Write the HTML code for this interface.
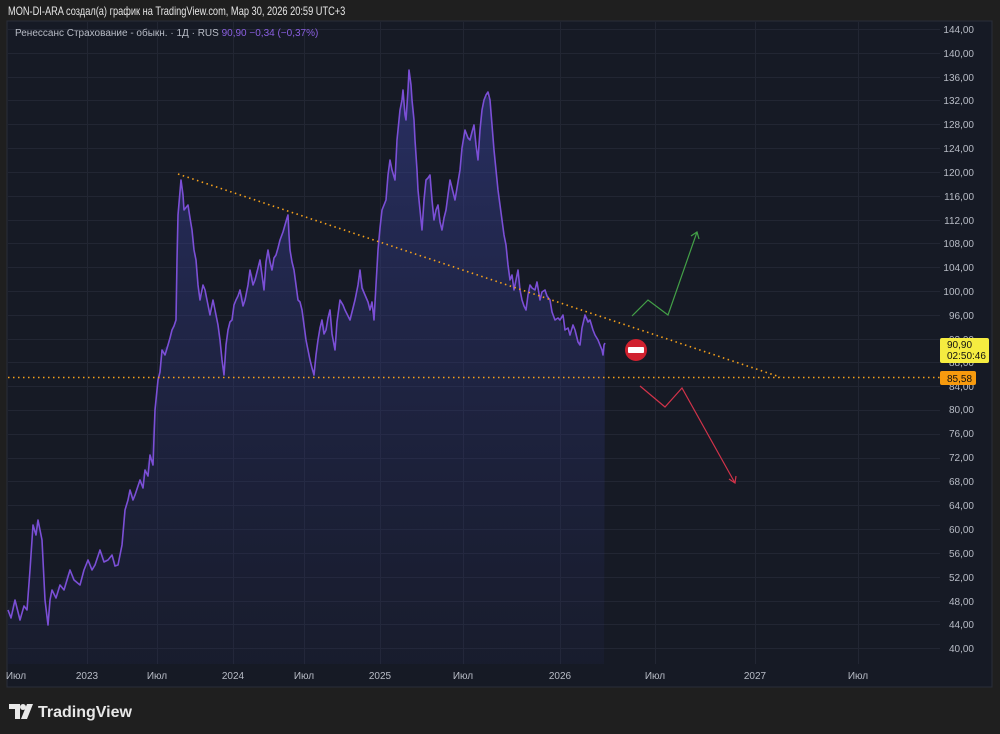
<!DOCTYPE html>
<html><head><meta charset="utf-8"><style>
body{margin:0;width:1000px;height:734px;background:#1f1f1f;font-family:"Liberation Sans","Noto Sans CJK SC",sans-serif;overflow:hidden;position:relative}
.t{position:absolute;color:#d9d9d9;white-space:nowrap}
</style></head><body>
<div class="t" style="left:8px;top:4px;font-size:12px;transform:scaleX(0.77);transform-origin:left top;color:#e6e6e6">MON-DI-ARA создал(а) график на TradingView.com, Мар 30, 2026 20:59 UTC+3</div>
<svg style="position:absolute;left:0;top:0" width="1000" height="734" font-family="Liberation Sans, sans-serif">
<defs><linearGradient id="g" x1="0" y1="0" x2="0" y2="1"><stop offset="0" stop-color="#3a44a0" stop-opacity="0.5"/><stop offset="1" stop-color="#2a2f6a" stop-opacity="0.12"/></linearGradient></defs>
<rect x="7" y="21" width="985" height="666" fill="#161a25" stroke="#2a2e39"/>
<g stroke="#222633" stroke-width="1">
<path d="M8 29.5H940M8 53.5H940M8 77.5H940M8 100.5H940M8 124.5H940M8 148.5H940M8 172.5H940M8 196.5H940M8 220.5H940M8 243.5H940M8 267.5H940M8 291.5H940M8 315.5H940M8 339.5H940M8 362.5H940M8 386.5H940M8 410.5H940M8 434.5H940M8 458.5H940M8 481.5H940M8 505.5H940M8 529.5H940M8 553.5H940M8 577.5H940M8 601.5H940M8 624.5H940M8 648.5H940"/>
<path d="M87.5 22V664M157.5 22V664M233.5 22V664M304.5 22V664M380.5 22V664M463.5 22V664M560.5 22V664M655.5 22V664M755.5 22V664M858.5 22V664"/>
</g>
<g fill="#b8bcc6" font-size="10" text-anchor="end">
<text x="974" y="33">144,00</text><text x="974" y="57">140,00</text><text x="974" y="81">136,00</text><text x="974" y="104">132,00</text><text x="974" y="128">128,00</text><text x="974" y="152">124,00</text><text x="974" y="176">120,00</text><text x="974" y="200">116,00</text><text x="974" y="224">112,00</text><text x="974" y="247">108,00</text><text x="974" y="271">104,00</text><text x="974" y="295">100,00</text><text x="974" y="319">96,00</text><text x="974" y="343">92,00</text><text x="974" y="366">88,00</text><text x="974" y="390">84,00</text><text x="974" y="413">80,00</text><text x="974" y="437">76,00</text><text x="974" y="461">72,00</text><text x="974" y="485">68,00</text><text x="974" y="509">64,00</text><text x="974" y="533">60,00</text><text x="974" y="557">56,00</text><text x="974" y="581">52,00</text><text x="974" y="605">48,00</text><text x="974" y="628">44,00</text><text x="974" y="652">40,00</text>
</g>
<g fill="#b8bcc6" font-size="10" text-anchor="middle">
<text x="16" y="679">Июл</text><text x="87" y="679">2023</text><text x="157" y="679">Июл</text><text x="233" y="679">2024</text><text x="304" y="679">Июл</text><text x="380" y="679">2025</text><text x="463" y="679">Июл</text><text x="560" y="679">2026</text><text x="655" y="679">Июл</text><text x="755" y="679">2027</text><text x="858" y="679">Июл</text>
</g>
<path fill="url(#g)" d="M8 610L15 600L20 620L27 610L33 525L38 520L42 540L45 600L48 625L52 590L60 585L70 570L80 585L88 560L95 565L100 550L108 560L112 555L118 565L122 545L125 510L130 490L135 495L140 480L145 470L150 455L155 410L158 380L162 350L168 345L172 330L176 320L178 215L181 180L184 210L188 205L192 230L196 260L200 300L205 290L210 315L215 310L220 340L224 375L228 330L232 320L236 300L240 290L245 300L250 270L255 280L260 260L264 290L268 250L272 270L276 255L280 240L285 225L288 215L290 250L294 270L298 300L302 310L306 340L310 360L314 375L318 340L322 320L326 330L330 310L335 350L340 300L345 310L350 320L355 300L360 270L365 295L370 310L374 320L378 250L382 210L386 200L390 160L395 180L400 110L403 90L406 120L409 70L412 100L415 140L418 190L422 230L426 180L430 175L434 220L438 205L442 230L446 210L450 180L455 200L460 170L465 130L470 140L474 125L478 160L482 110L486 95L490 100L494 150L498 190L502 220L506 245L510 280L514 290L518 270L522 300L526 310L530 285L535 290L540 300L545 290L550 300L555 320L560 320L565 330L570 335L575 330L580 345L585 315L590 320L595 335L600 345L603 355L605 343L604 664L8 664Z"/>
<polyline fill="none" stroke="#7b4fd6" stroke-width="1.6" stroke-linejoin="round" points="8,610 11,618 15,600 18,612 20,620 24,606 27,610 30,570 33,525 36,535 38,520 42,540 45,600 48,625 50,600 52,590 56,598 60,585 64,590 70,570 74,580 80,585 84,570 88,560 92,570 95,565 100,550 104,562 108,560 112,555 115,566 118,565 122,545 125,510 128,500 130,490 133,500 135,495 140,480 143,488 145,470 148,476 150,455 153,465 155,410 158,380 160,372 162,350 165,355 168,345 170,338 172,330 174,326 176,320 177,260 178,215 181,180 183,195 184,210 188,205 190,218 192,230 194,250 196,260 198,285 200,300 203,285 205,290 208,305 210,315 213,300 215,310 218,325 220,340 222,360 224,375 226,345 228,330 230,322 232,320 234,305 236,300 238,296 240,290 243,306 245,300 248,285 250,270 253,285 255,280 258,268 260,260 262,275 264,290 266,262 268,250 270,262 272,270 274,258 276,255 278,248 280,240 283,232 285,225 287,218 288,215 289,235 290,250 292,262 294,270 296,285 298,300 300,302 302,310 304,325 306,340 308,350 310,360 312,368 314,375 316,355 318,340 320,328 322,320 324,334 326,330 328,318 330,310 332,334 335,350 337,322 340,300 343,305 345,310 348,316 350,320 353,308 355,300 358,285 360,270 362,288 365,295 368,302 370,310 372,302 374,320 376,285 378,250 380,228 382,210 384,205 386,200 388,175 390,160 392,170 395,180 397,140 400,110 402,100 403,90 405,115 406,120 408,90 409,70 411,85 412,100 414,120 415,140 417,170 418,190 420,210 422,230 424,200 426,180 428,178 430,175 432,200 434,220 436,210 438,205 440,222 442,230 444,218 446,210 448,195 450,180 452,188 455,200 457,188 460,170 462,148 465,130 468,138 470,140 472,132 474,125 476,145 478,160 480,130 482,110 484,100 486,95 488,92 490,100 492,125 494,150 496,170 498,190 500,205 502,220 504,235 506,245 508,265 510,280 512,275 514,290 516,280 518,270 520,290 522,300 524,306 526,310 528,295 530,285 532,288 535,290 537,282 540,300 542,292 545,290 547,296 550,300 552,312 555,320 558,318 560,320 563,315 565,330 568,328 570,335 573,325 575,330 578,342 580,345 582,328 585,315 588,322 590,320 593,330 595,335 598,340 600,345 602,350 603,355 604,345 605,343"/>
<g stroke="#f7a21b" stroke-width="1.6" stroke-dasharray="1.5 3.5" fill="none">
<path d="M178 174L780 377"/><path d="M8 377.5H940"/>
</g>
<polyline fill="none" stroke="#43a047" stroke-width="1.2" points="632,316 648,300 668,315 697,232"/>
<polyline fill="none" stroke="#43a047" stroke-width="1.2" points="691,236 697,232 699,239"/>
<polyline fill="none" stroke="#d2334a" stroke-width="1.2" points="640,386 665,407 682,388 735,483"/>
<polyline fill="none" stroke="#d2334a" stroke-width="1.2" points="729,479 735,483 736,476"/>
<circle cx="636" cy="350" r="11" fill="#d0212f"/><rect x="628" y="347" width="16" height="6" rx="1" fill="#fff"/>
<rect x="940" y="338" width="49" height="25" rx="2" fill="#f5ec40"/>
<text x="947" y="348" font-size="10" fill="#111">90,90</text><text x="947" y="359" font-size="10" fill="#111">02:50:46</text>
<rect x="940" y="371" width="36" height="14" rx="2" fill="#f79a0e"/>
<text x="947" y="382" font-size="10" fill="#111">85,58</text>
<text x="15" y="36" font-size="10" fill="#b8bcc6">Ренессанс Страхование - обыкн. · 1Д · RUS <tspan fill="#8a5fe0">90,90  −0,34 (−0,37%)</tspan></text>
<g fill="#e8e8e8"><path d="M9 704H20V719H15V709H9Z"/><circle cx="23" cy="707" r="3"/><path d="M27 704H33L27 719H21Z"/></g>
<text x="38" y="717" font-size="16" font-weight="bold" fill="#e8e8e8">TradingView</text>
</svg>
</body></html>
